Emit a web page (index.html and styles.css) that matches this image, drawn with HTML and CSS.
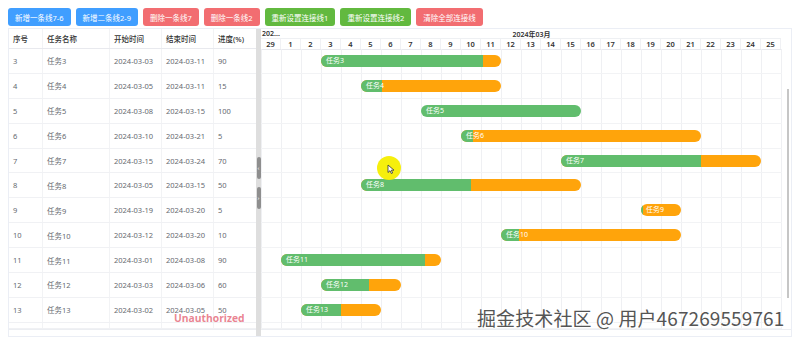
FILE: index.html
```html
<!DOCTYPE html>
<html lang="zh-CN">
<head>
  <meta charset="UTF-8">
  <meta name="viewport" content="width=device-width, initial-scale=1.0">
  <title>甘特图</title>
  <link rel="stylesheet" href="styles.css">
</head>
<body>

  <div class="toolbar">
    <button class="btn blue">新增一条线7-6</button>
    <button class="btn blue">新增二条线2-9</button>
    <button class="btn red">删除一条线7</button>
    <button class="btn red">删除一条线2</button>
    <button class="btn green">重新设置连接线1</button>
    <button class="btn green">重新设置连接线2</button>
    <button class="btn red">清除全部连接线</button>
  </div>

  <div class="gantt">
    <!-- left table -->
    <div class="table-side">
      <div class="row head">
        <div class="cell">序号</div>
        <div class="cell">任务名称</div>
        <div class="cell">开始时间</div>
        <div class="cell">结束时间</div>
        <div class="cell">进度(%)</div>
      </div>
      <div class="tbody">
        <div class="row"><div class="cell">3</div><div class="cell">任务3</div><div class="cell">2024-03-03</div><div class="cell">2024-03-11</div><div class="cell">90</div></div>
        <div class="row"><div class="cell">4</div><div class="cell">任务4</div><div class="cell">2024-03-05</div><div class="cell">2024-03-11</div><div class="cell">15</div></div>
        <div class="row"><div class="cell">5</div><div class="cell">任务5</div><div class="cell">2024-03-08</div><div class="cell">2024-03-15</div><div class="cell">100</div></div>
        <div class="row"><div class="cell">6</div><div class="cell">任务6</div><div class="cell">2024-03-10</div><div class="cell">2024-03-21</div><div class="cell">5</div></div>
        <div class="row"><div class="cell">7</div><div class="cell">任务7</div><div class="cell">2024-03-15</div><div class="cell">2024-03-24</div><div class="cell">70</div></div>
        <div class="row"><div class="cell">8</div><div class="cell">任务8</div><div class="cell">2024-03-05</div><div class="cell">2024-03-15</div><div class="cell">50</div></div>
        <div class="row"><div class="cell">9</div><div class="cell">任务9</div><div class="cell">2024-03-19</div><div class="cell">2024-03-20</div><div class="cell">5</div></div>
        <div class="row"><div class="cell">10</div><div class="cell">任务10</div><div class="cell">2024-03-12</div><div class="cell">2024-03-20</div><div class="cell">10</div></div>
        <div class="row"><div class="cell">11</div><div class="cell">任务11</div><div class="cell">2024-03-01</div><div class="cell">2024-03-08</div><div class="cell">90</div></div>
        <div class="row"><div class="cell">12</div><div class="cell">任务12</div><div class="cell">2024-03-03</div><div class="cell">2024-03-06</div><div class="cell">60</div></div>
        <div class="row"><div class="cell">13</div><div class="cell">任务13</div><div class="cell">2024-03-02</div><div class="cell">2024-03-05</div><div class="cell">50</div></div>
        <div class="row partial"><div class="cell"></div><div class="cell"></div><div class="cell"></div><div class="cell"></div><div class="cell"></div></div>
      </div>
      <div class="hscroll"></div>
    </div>

    <div class="splitter">
      <span class="handle">&lsaquo;</span>
      <span class="handle">&rsaquo;</span>
    </div>

    <!-- right chart -->
    <div class="chart-side">
      <div class="timeline">
        <div class="months">
          <div class="month feb">202...</div>
          <div class="month mar">2024年03月</div>
        </div>
        <div class="days">
          <div class="day">29</div>
          <div class="day">1</div><div class="day">2</div><div class="day">3</div><div class="day">4</div><div class="day">5</div>
          <div class="day">6</div><div class="day">7</div><div class="day">8</div><div class="day">9</div><div class="day">10</div>
          <div class="day">11</div><div class="day">12</div><div class="day">13</div><div class="day">14</div><div class="day">15</div>
          <div class="day">16</div><div class="day">17</div><div class="day">18</div><div class="day">19</div><div class="day">20</div>
          <div class="day">21</div><div class="day">22</div><div class="day">23</div><div class="day">24</div><div class="day">25</div>
        </div>
      </div>
      <div class="chart-body">
        <div class="bar-row"><div class="bar" style="margin-left:60px;width:180px"><div class="done" style="width:90%"></div><span class="label">任务3</span></div></div>
        <div class="bar-row"><div class="bar" style="margin-left:100px;width:140px"><div class="done" style="width:15%"></div><span class="label">任务4</span></div></div>
        <div class="bar-row"><div class="bar" style="margin-left:160px;width:160px"><div class="done" style="width:100%"></div><span class="label">任务5</span></div></div>
        <div class="bar-row"><div class="bar" style="margin-left:200px;width:240px"><div class="done" style="width:5%"></div><span class="label">任务6</span></div></div>
        <div class="bar-row"><div class="bar" style="margin-left:300px;width:200px"><div class="done" style="width:70%"></div><span class="label">任务7</span></div></div>
        <div class="bar-row"><div class="bar" style="margin-left:100px;width:220px"><div class="done" style="width:50%"></div><span class="label">任务8</span></div></div>
        <div class="bar-row"><div class="bar" style="margin-left:380px;width:40px"><div class="done" style="width:5%"></div><span class="label">任务9</span></div></div>
        <div class="bar-row"><div class="bar" style="margin-left:240px;width:180px"><div class="done" style="width:10%"></div><span class="label">任务10</span></div></div>
        <div class="bar-row"><div class="bar" style="margin-left:20px;width:160px"><div class="done" style="width:90%"></div><span class="label">任务11</span></div></div>
        <div class="bar-row"><div class="bar" style="margin-left:60px;width:80px"><div class="done" style="width:60%"></div><span class="label">任务12</span></div></div>
        <div class="bar-row"><div class="bar" style="margin-left:40px;width:80px"><div class="done" style="width:50%"></div><span class="label">任务13</span></div></div>
        <div class="bar-row partial"></div>
      </div>
      <div class="hscroll"></div>
      <div class="vscroll"></div>
    </div>

    <!-- overlays from the recording -->
    <div class="pointer">
      <svg width="8" height="10" viewBox="0 0 8 10"><path d="M1 1 L1 8.5 L3 6.7 L4.4 9.6 L5.6 9 L4.3 6.2 L7 6.2 Z" fill="#fff" stroke="#333" stroke-width="0.8"/></svg>
    </div>
    <div class="stamp">Unauthorized</div>
    <div class="watermark">掘金技术社区 @ 用户467269559761</div>
  </div>

</body>
</html>
```

FILE: styles.css
```css
body {
  margin: 8px;
  font-family: "Noto Sans", "Noto Sans CJK SC", sans-serif;
  font-size: 7.5px;
  color: #666a70;
  background-color: #fff;
}

.toolbar {
  display: flex;
  gap: 5px;
  height: 18px;
}

.btn {
  height: 18px;
  padding: 0 7px;
  border: none;
  border-radius: 3px;
  color: #fff;
  font-family: inherit;
  font-size: 7.5px;
  cursor: pointer;
}

.btn.blue {
  background-color: #409eff;
}

.btn.red {
  background-color: #f26d71;
}

.btn.green {
  background-color: #62b93f;
}

/* Gantt wrapper */
.gantt {
  position: relative;
  display: flex;
  margin-top: 2px;
  height: 309px;
  border: 1px solid #ebeef5;
  box-sizing: border-box;
  overflow: hidden;
}

.table-side {
  width: 247px;
  display: flex;
  flex-direction: column;
}

.row {
  display: grid;
  grid-template-columns: 34px 67px 52px 52px 42px;
  height: 24.9px;
  border-bottom: 1px solid #f0f1f4;
  box-sizing: border-box;
}

.row.head {
  height: 20px;
  color: #333;
  font-weight: 500;
  border-bottom: 1px solid #e8e9ee;
}

.row.partial {
  height: 6px;
}

.cell {
  display: flex;
  align-items: center;
  padding-left: 4px;
  border-right: 1px solid #f2f3f5;
  white-space: nowrap;
  overflow: hidden;
}

.cell:last-child {
  border-right: none;
}

.tbody {
  flex: 1;
}

.hscroll {
  height: 7px;
  border-top: 1px solid #eceef2;
  box-sizing: border-box;
}

.splitter {
  width: 5px;
  background-color: #dedede;
  display: flex;
  flex-direction: column;
  justify-content: center;
  align-items: center;
  gap: 8px;
}

.handle {
  width: 4px;
  height: 22px;
  border-radius: 2px;
  background-color: #8e8e8e;
  color: #fff;
  font-size: 6px;
  line-height: 22px;
  text-align: center;
}

/* Chart */
.chart-side {
  position: relative;
  flex: 1;
  display: flex;
  flex-direction: column;
  overflow: hidden;
}

.timeline {
  height: 20px;
  width: 520px;
  font-weight: 600;
  color: #333;
  font-size: 7px;
}

.months {
  display: flex;
  height: 10px;
  border-bottom: 1px solid #eef0f3;
  box-sizing: border-box;
}

.month {
  display: flex;
  align-items: center;
  white-space: nowrap;
}

.month.feb {
  width: 20px;
  padding-left: 1px;
}

.month.mar {
  flex: 1;
  justify-content: center;
}

.days {
  display: flex;
  height: 10px;
  border-bottom: 1px solid #e8e9ee;
  box-sizing: content-box;
}

.day {
  width: 20px;
  flex-shrink: 0;
  text-align: center;
  line-height: 10px;
  font-size: 7.5px;
  border-right: 1px solid #f0f1f4;
  box-sizing: border-box;
}

.chart-body {
  flex: 1;
  width: 521px;
  background-image: linear-gradient(to right, #eff0f3 1px, transparent 1px);
  background-size: 20px 100%;
}

.bar-row {
  height: 24.9px;
  display: flex;
  align-items: center;
  border-bottom: 1px solid #f2f3f5;
  box-sizing: border-box;
}

.bar-row.partial {
  height: 6px;
}

.bar {
  position: relative;
  height: 12px;
  border-radius: 6px;
  background-color: #ffa40b;
  overflow: hidden;
  flex-shrink: 0;
}

.done {
  height: 100%;
  background-color: #61bd6d;
}

.label {
  position: absolute;
  left: 5px;
  top: 0;
  line-height: 12px;
  font-size: 7px;
  color: #fff;
  white-space: nowrap;
}

.vscroll {
  position: absolute;
  right: 2px;
  top: 60px;
  width: 2px;
  height: 209px;
  background-color: #c6c6c6;
}

/* recording overlays */
.pointer {
  position: absolute;
  left: 368px;
  top: 127px;
  width: 24px;
  height: 24px;
  border-radius: 50%;
  background-color: rgba(246, 238, 0, 0.95);
  display: flex;
  align-items: center;
  justify-content: center;
}

.pointer svg {
  margin-left: 4px;
  margin-top: 2px;
}

.stamp {
  position: absolute;
  left: 165px;
  top: 282px;
  font-family: "Open Sans", "Noto Sans", sans-serif;
  font-size: 10.3px;
  font-weight: 700;
  color: rgba(230, 110, 125, 0.85);
}

.watermark {
  position: absolute;
  left: 468px;
  top: 275px;
  font-family: "Noto Sans CJK SC", sans-serif;
  font-size: 19px;
  letter-spacing: 0.1px;
  color: #555;
  white-space: nowrap;
  text-shadow: 0 0 2px #fff, 1px 1px 1px #fff;
}
```
